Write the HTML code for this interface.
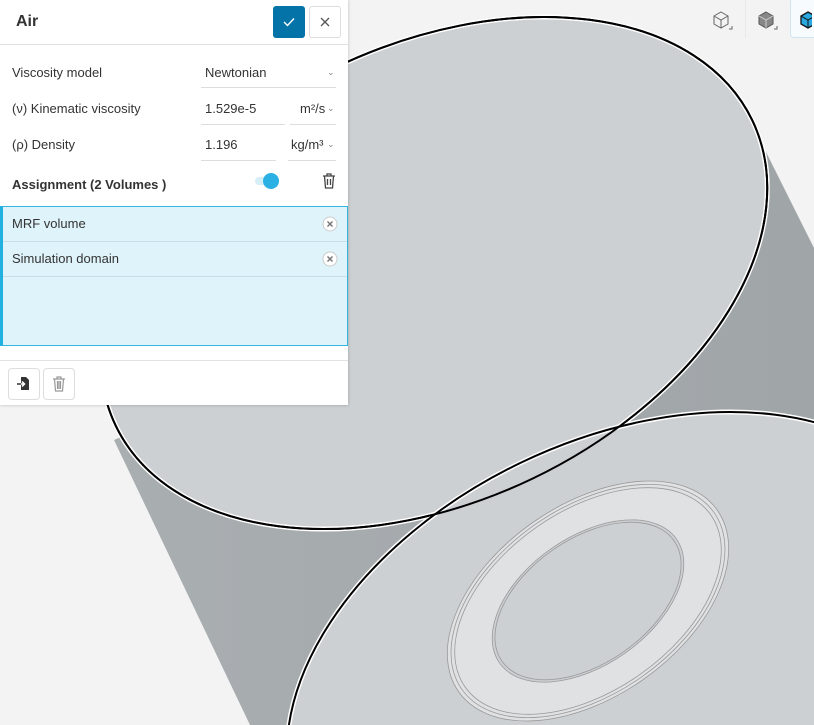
<!DOCTYPE html>
<html style="overflow:hidden;width:814px;height:725px"><head><style>
body{margin:0;width:814px;height:725px;overflow:hidden;background:#f3f3f3;font-family:"Liberation Sans",sans-serif;position:relative;color:#333}
.abs{position:absolute}
#panel{left:0;top:0;width:348px;height:405px;background:#fff;box-shadow:0 0 3px rgba(0,0,0,.25)}
.lbl{font-size:13px;color:#333}
.ul{border-bottom:1px solid #ddd}
.chev{font-size:9px;color:#888}
</style></head><body>
<svg class="abs" style="left:0;top:0;display:block" width="814" height="725" viewBox="0 0 814 725" overflow="hidden">
<defs>
<linearGradient id="dg" x1="0" y1="0" x2="1" y2="0"><stop offset="0" stop-color="#a9aeb1"/><stop offset="1" stop-color="#a0a5a8"/></linearGradient>
</defs>
<polygon points="114,440 766,152 814,248 814,725 250,725" fill="url(#dg)"/>
<ellipse cx="434" cy="273" rx="353" ry="228" transform="rotate(-25.6 434 273)" fill="#cdd0d3" stroke="#fff" stroke-width="5"/>
<ellipse cx="434" cy="273" rx="353" ry="228" transform="rotate(-25.6 434 273)" fill="none" stroke="#000" stroke-width="2"/>
<ellipse cx="620" cy="668" rx="353" ry="228" transform="rotate(-25.6 620 668)" fill="#cdd0d3" stroke="#fff" stroke-width="5"/>
<ellipse cx="620" cy="668" rx="353" ry="228" transform="rotate(-25.6 620 668)" fill="none" stroke="#000" stroke-width="2"/>
<g transform="rotate(-35 588 601)" fill="none" stroke="#999" stroke-width="0.8">
<ellipse cx="588" cy="601" rx="158" ry="96" fill="#e0e1e3"/>
<ellipse cx="588" cy="601" rx="154" ry="93"/>
<ellipse cx="588" cy="601" rx="150" ry="90"/>
<ellipse cx="588" cy="601" rx="108" ry="64" fill="#cdd0d3"/>
<ellipse cx="588" cy="601" rx="105" ry="62"/>
</g>
<ellipse cx="434" cy="273" rx="353" ry="228" transform="rotate(-25.6 434 273)" fill="none" stroke="#000" stroke-width="2"/>
</svg>
<div class="abs" style="left:745px;top:0;width:1px;height:38px;background:#e8e8e8"></div>
<div class="abs" style="left:790px;top:-2px;width:23px;height:38px;border:1px solid #cfe6f2;border-right:none;border-radius:4px 0 0 4px;background:#f7fbfd"></div>
<svg class="abs" style="left:712px;top:10px" width="100" height="24">
<g fill="none" stroke="#666" stroke-width="1"><path d="M9 2 L16 6 L16 14 L9 18 L2 14 L2 6 Z M2 6 L9 10 L16 6 M9 10 L9 18"/><path d="M20 16 L20 19 L17 19"/></g>
<g stroke="#555" stroke-width="1"><path d="M54 2 L61 6 L61 14 L54 18 L47 14 L47 6 Z" fill="#888"/><path d="M47 6 L54 10 L61 6 M54 10 L54 18" fill="none" stroke="#ccc"/><path d="M65 16 L65 19 L62 19" fill="none" stroke="#666"/></g>
<g><path d="M96 2 L103 6 L103 14 L96 18 L89 14 L89 6 Z" fill="#29a8e0" stroke="#111" stroke-width="1.3"/><path d="M89 6 L96 10 L103 6 M96 10 L96 18" fill="none" stroke="#111"/></g>
</svg>
<div id="panel" class="abs">
<div class="abs" style="left:16px;top:13px;font-size:16px;font-weight:bold;color:#333">Air</div>
<div class="abs" style="left:273px;top:6px;width:32px;height:32px;background:#0473a8;border-radius:3px"><svg width="32" height="32"><path d="M11 16 L14.5 19.5 L21 12.5" fill="none" stroke="#fff" stroke-width="1.4"/></svg></div>
<div class="abs" style="left:309px;top:6px;width:30px;height:30px;border:1px solid #ddd;border-radius:3px"><svg width="30" height="30"><path d="M11 11 L19 19 M19 11 L11 19" stroke="#555" stroke-width="1.3"/></svg></div>
<div class="abs" style="left:0;top:44px;width:348px;height:1px;background:#e2e2e2"></div>
<div class="abs lbl" style="left:12px;top:65px">Viscosity model</div>
<div class="abs lbl ul" style="left:201px;top:65px;width:135px;height:23px;padding-left:4px;box-sizing:border-box">Newtonian</div>
<div class="abs chev" style="left:327px;top:67px">&#8964;</div>
<div class="abs lbl" style="left:12px;top:101px">(ν) Kinematic viscosity</div>
<div class="abs lbl ul" style="left:201px;top:101px;width:84px;height:24px;padding-left:4px;box-sizing:border-box">1.529e-5</div>
<div class="abs lbl ul" style="left:290px;top:101px;width:46px;height:24px;padding-left:10px;box-sizing:border-box">m²/s</div>
<div class="abs chev" style="left:327px;top:103px">&#8964;</div>
<div class="abs lbl" style="left:12px;top:137px">(ρ) Density</div>
<div class="abs lbl ul" style="left:201px;top:137px;width:75px;height:24px;padding-left:4px;box-sizing:border-box">1.196</div>
<div class="abs lbl ul" style="left:288px;top:137px;width:48px;height:24px;padding-left:3px;box-sizing:border-box">kg/m³</div>
<div class="abs chev" style="left:327px;top:139px">&#8964;</div>
<div class="abs lbl" style="left:12px;top:177px;font-weight:bold">Assignment (2 Volumes )</div>
<div class="abs" style="left:255px;top:177px;width:20px;height:8px;border-radius:4px;background:#d6eef8"></div>
<div class="abs" style="left:263px;top:173px;width:16px;height:16px;border-radius:50%;background:#2bb0e4"></div>
<svg class="abs" style="left:321px;top:172px" width="16" height="18"><g fill="none" stroke="#444" stroke-width="1.3"><path d="M2 4 H14 M6 4 V2 H10 V4 M3.5 4 L4.5 16 H11.5 L12.5 4 M6.5 7 V13 M9.5 7 V13"/></g></svg>
<div class="abs" style="left:0;top:206px;height:138px;background:#dff3fa;border:1px solid #33b5e0;border-left:3px solid #22b0e2;width:344px"></div>
<div class="abs" style="left:3px;top:241px;width:344px;height:1px;background:#c9dde6"></div>
<div class="abs" style="left:3px;top:276px;width:344px;height:1px;background:#c9dde6"></div>
<div class="abs lbl" style="left:12px;top:216px">MRF volume</div>
<div class="abs lbl" style="left:12px;top:251px">Simulation domain</div>
<svg class="abs" style="left:322px;top:216px" width="16" height="16"><circle cx="8" cy="8" r="7" fill="#fff" stroke="#ccc"/><path d="M5.5 5.5 L10.5 10.5 M10.5 5.5 L5.5 10.5" stroke="#777" stroke-width="1.5"/></svg>
<svg class="abs" style="left:322px;top:251px" width="16" height="16"><circle cx="8" cy="8" r="7" fill="#fff" stroke="#ccc"/><path d="M5.5 5.5 L10.5 10.5 M10.5 5.5 L5.5 10.5" stroke="#777" stroke-width="1.5"/></svg>
<div class="abs" style="left:0;top:360px;width:348px;height:1px;background:#e2e2e2"></div>
<div class="abs" style="left:8px;top:368px;width:30px;height:30px;border:1px solid #ddd;border-radius:4px"><svg width="30" height="30"><path d="M12 8 H17 L20 11 V21 H12 Z" fill="#333"/><path d="M8 15 H15 M13 12.5 L15.5 15 L13 17.5" stroke="#fff" stroke-width="1.5" fill="none"/><path d="M8 15 H12" stroke="#333" stroke-width="1.5"/></svg></div>
<div class="abs" style="left:43px;top:368px;width:30px;height:30px;border:1px solid #ddd;border-radius:4px"><svg width="30" height="30"><g fill="none" stroke="#999" stroke-width="1.2"><path d="M9 10 H21 M13 10 V8 H17 V10 M10.5 10 L11.5 22 H18.5 L19.5 10 M13.5 12 V20 M15 12 V20 M16.5 12 V20"/></g></svg></div>
</div>
</body></html>
